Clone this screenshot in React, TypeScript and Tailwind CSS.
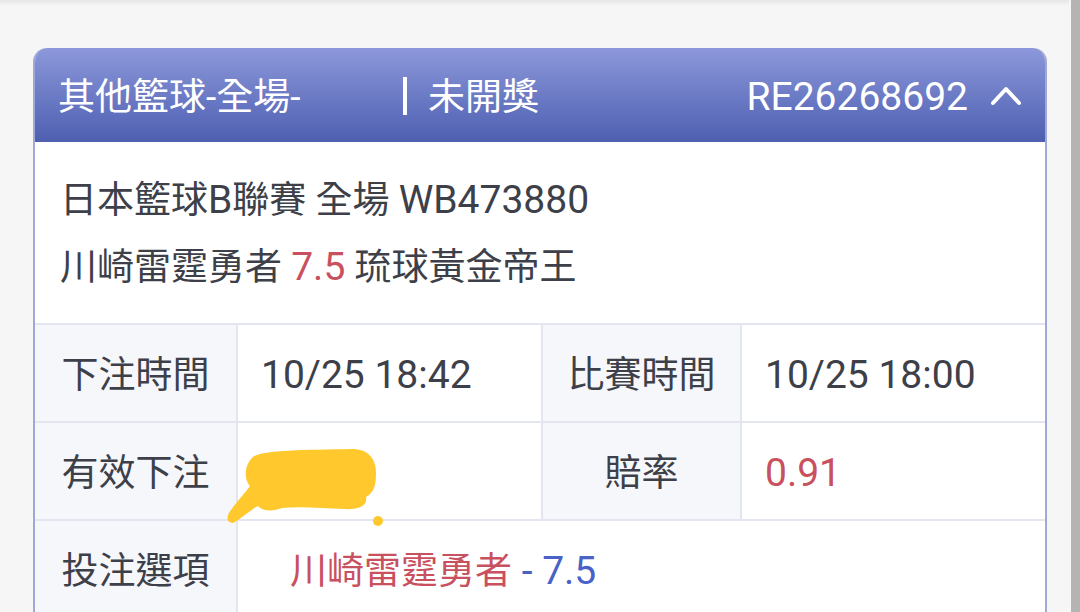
import React from "react";

export default function App() {
  const label = "flex items-center justify-center pt-[5px] bg-[#f6f7fb] text-[37px] text-[#3d4049]";
  const value = "flex items-center pt-[5px] bg-white text-[39px] text-[#3d4049] pl-[23px]";
  const L = "text-[39px]";
  return (
    <div className="relative w-[1080px] h-[612px] overflow-hidden bg-[#f6f6f6] flex font-['Roboto','Noto_Sans_CJK_TC',sans-serif]">
      <div className="absolute left-0 top-0 w-[1069px] h-[6px] bg-gradient-to-b from-[#e6e6e6] to-[#f6f6f6]" />
      <div className="flex-1 pt-[48px] pl-[33px] pr-[24px]">
        <div className="rounded-t-[14px] border-x-2 border-[#a0a8d6] overflow-hidden">
          <div className="h-[94px] -mx-[2px] px-[25px] pt-[5px] flex items-center text-white text-[37px] bg-gradient-to-b from-[#8c98da] to-[#4f5fb1] rounded-t-[14px]">
            <span className="w-[345px] whitespace-nowrap">其他籃球-全場-</span>
            <span className="w-[4px] h-[38px] bg-white -mt-[4px]" />
            <span className="ml-[21px]">未開獎</span>
            <span className="flex-1" />
            <span className={L}>RE26268692</span>
            <svg className="ml-[22px] -mt-[4px]" width="32" height="22" viewBox="0 0 32 22">
              <path d="M3 18 L16 4 L29 18" fill="none" stroke="white" strokeWidth="4" strokeLinecap="round" strokeLinejoin="round" />
            </svg>
          </div>
          <div className="bg-white pl-[25px] pt-[25px] pb-[22px] text-[37px] leading-[67px] text-[#3d4049]">
            <div>
              日本籃球<span className={L}>B</span>聯賽 全場 <span className={L}>WB473880</span>
            </div>
            <div>
              川崎雷霆勇者 <span className={L + " text-[#c9505e]"}>7.5</span> 琉球黃金帝王
            </div>
          </div>
          <div className="grid grid-cols-[201px_303px_197px_303px] auto-rows-[96px] gap-[2px] bg-[#e3e6f0] border-t-2 border-[#e3e6f0]">
            <div className={label}>下注時間</div>
            <div className={value}>10/25 18:42</div>
            <div className={label}>比賽時間</div>
            <div className={value}>10/25 18:00</div>
            <div className={label}>有效下注</div>
            <div className={value}></div>
            <div className={label}>賠率</div>
            <div className={value}>
              <span className="text-[#c9505e]">0.91</span>
            </div>
            <div className={label}>投注選項</div>
            <div className="col-span-3 flex items-center pt-[5px] bg-white text-[37px] pl-[52px]">
              <span className="text-[#c9505e]">川崎雷霆勇者</span>
              <span className="text-[#4a62c8] text-[39px]">&nbsp;- 7.5</span>
            </div>
          </div>
        </div>
      </div>
      <div className="w-[11px] h-full bg-[#b4b4b4]" />
      <svg className="absolute left-0 top-0 pointer-events-none" width="1080" height="612" viewBox="0 0 1080 612">
        <path
          d="M252 458 C258 450 300 450 352 449 C368 449 376 458 376 474 C376 488 372 494 366 497 C368 506 358 510 344 509 C322 508 300 506 282 508 C272 512 262 511 258 506 C250 510 240 520 233 523 C226 523 226 516 231 510 C238 500 246 492 250 486 C244 480 244 466 252 458 Z"
          fill="#ffc92e"
        />
        <circle cx="378" cy="521" r="5" fill="#ffc92e" />
      </svg>
    </div>
  );
}
